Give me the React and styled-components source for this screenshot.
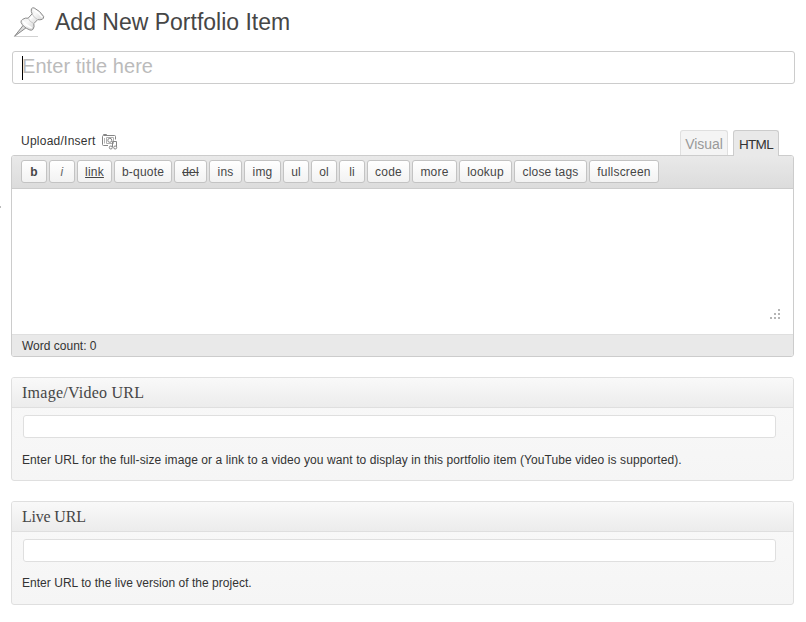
import React from "react";
import styled, { createGlobalStyle, css } from "styled-components";

const GlobalStyle = createGlobalStyle`
  *, *::before, *::after { box-sizing: border-box; }
  body {
    margin: 0;
    background: #fff;
    color: #333;
    font: 12px/18px "Liberation Sans", Arial, sans-serif;
  }
`;

const Page = styled.main`
  position: relative;
  width: 806px;
  height: 622px;
  padding: 0 12px 0 11px;
  overflow: hidden;
`;

const Heading = styled.header`
  display: flex;
  height: 51px;
`;

const PinIcon = styled.svg`
  width: 36px;
  height: 36px;
  margin: 4px 8px 0 0;
`;

const Title = styled.h1`
  margin: 7px 0 0;
  color: #464646;
  font-size: 23px;
  font-weight: 400;
  line-height: 30px;
  white-space: nowrap;
`;

const TitleField = styled.div`
  display: flex;
  width: 783px;
  height: 33px;
  margin-left: 1px;
  padding: 4px 9px;
  border: 1px solid #ccc;
  border-radius: 3px;
`;

const Caret = styled.span`
  width: 1px;
  height: 24px;
  margin-right: -1px;
  background: #000;
  z-index: 1;
`;

const Placeholder = styled.span`
  color: #bbb;
  font-size: 20px;
  line-height: 21px;
  letter-spacing: 0.06px;
  white-space: nowrap;
`;

const EditorTop = styled.div`
  display: flex;
  height: 71px;
  padding: 46px 15px 0 10px;
`;

const MediaLabel = styled.span`
  margin-top: 2px;
  line-height: 18px;
  letter-spacing: 0.25px;
`;

const MediaIcon = styled.svg`
  width: 16px;
  height: 16px;
  margin: 4px 0 0 6px;
`;

const Tabs = styled.div`
  display: flex;
  gap: 5px;
  margin-left: auto;
`;

const Tab = styled.div`
  width: ${(p) => p.$width}px;
  height: 25px;
  border: 1px solid #dfdfdf;
  border-bottom: 0;
  border-radius: 3px 3px 0 0;
  background: #f4f4f4;
  color: #999;
  font-size: 14px;
  line-height: 27px;
  letter-spacing: -0.1px;
  text-align: center;
  white-space: nowrap;
  ${(p) =>
    p.$active &&
    css`
      z-index: 1;
      height: 26px;
      border-color: #ccc;
      background: #e9e9e9;
      color: #333;
      font-size: 13.5px;
      letter-spacing: -0.7px;
    `}
`;

const Editor = styled.section`
  display: flex;
  flex-direction: column;
  width: 783px;
  height: 202px;
  border: 1px solid #ccc;
  border-radius: 3px;
  overflow: hidden;
`;

const Toolbar = styled.div`
  display: flex;
  gap: 2px;
  height: 33px;
  padding: 4px 9px;
  border-bottom: 1px solid #ccc;
  background: linear-gradient(#e9e9e9, #dcdcdc);
`;

const ToolButton = styled.button`
  width: ${(p) => p.$width}px;
  height: 23px;
  padding: 1px 0 0;
  border: 1px solid #c3c3c3;
  border-radius: 3px;
  background: linear-gradient(#fff, #f2f2f2);
  color: #464646;
  font: 12px/20px "Liberation Sans", Arial, sans-serif;
  letter-spacing: 0.2px;
  white-space: nowrap;
  ${(p) => p.$look}
`;

const TextArea = styled.div`
  display: flex;
  flex: 1;
  align-items: flex-end;
  justify-content: flex-end;
  padding: 0 12px 14px;
`;

const Grip = styled.svg`
  width: 11px;
  height: 11px;
`;

const StatusBar = styled.footer`
  height: 22px;
  padding: 1px 10px;
  border-top: 1px solid #dfdfdf;
  background: #e9e9e9;
  line-height: 20px;
`;

const Panel = styled.section`
  width: 783px;
  height: 104px;
  margin-top: 20px;
  border: 1px solid #dfdfdf;
  border-radius: 3px;
  background: linear-gradient(#f9f9f9, #f5f5f5);
  overflow: hidden;
`;

const PanelTitle = styled.h2`
  height: 30px;
  margin: 0;
  padding: 0 10px;
  border-bottom: 1px solid #dfdfdf;
  background: linear-gradient(#f9f9f9, #ececec);
  color: #464646;
  font: 16px/30px Georgia, "Bitstream Charter", "Liberation Serif", serif;
  letter-spacing: ${(p) => p.$spacing};
`;

const UrlField = styled.div`
  width: 753px;
  height: 23px;
  margin: 7px 0 0 11px;
  border: 1px solid #dfdfdf;
  border-radius: 3px;
  background: #fff;
`;

const Help = styled.p`
  margin: ${(p) => p.$gap} 0 0 10px;
  line-height: 18px;
  letter-spacing: ${(p) => p.$spacing};
  white-space: nowrap;
`;

const EdgeMark = styled.span`
  position: absolute;
  top: 206px;
  left: 0;
  width: 1px;
  height: 2px;
  background: #bbb;
`;

const bold = css`font-weight: 700;`;
const italic = css`font-style: italic; color: #666;`;
const underline = css`text-decoration: underline;`;
const strike = css`text-decoration: line-through;`;

const tools = [
  ["b", 26, bold],
  ["i", 26, italic],
  ["link", 35, underline],
  ["b-quote", 58],
  ["del", 33, strike],
  ["ins", 33],
  ["img", 37],
  ["ul", 26],
  ["ol", 26],
  ["li", 26],
  ["code", 43],
  ["more", 45],
  ["lookup", 53],
  ["close tags", 73],
  ["fullscreen", 70],
];

const panels = [
  {
    title: "Image/Video URL",
    help: "Enter URL for the full-size image or a link to a video you want to display in this portfolio item (YouTube video is supported).",
    titleSpacing: "0.25px",
    helpSpacing: "0.09px",
    helpGap: "13px",
  },
  {
    title: "Live URL",
    help: "Enter URL to the live version of the project.",
    titleSpacing: "-0.2px",
    helpSpacing: "0.03px",
    helpGap: "12px",
  },
];

function Pushpin() {
  return (
    <PinIcon viewBox="0 0 36 36">
      <defs>
        <linearGradient id="pin" x1="0" y1="0" x2="1" y2="1">
          <stop offset="0" stopColor="#dedede" />
          <stop offset=".45" stopColor="#f8f8f8" />
          <stop offset="1" stopColor="#bcbcbc" />
        </linearGradient>
      </defs>
      <path d="M4 32.5H27" stroke="#d2d2d2" strokeWidth="1" />
      <path d="M12.3 21.2L3.5 32.3L15.3 23.6Z" fill="#ddd" stroke="#888" strokeWidth="1" strokeLinejoin="round" />
      <path
        d="M20.4 4.8Q21.4 3.4 23.1 3.9Q29.3 7 32.6 12.4Q33 14.3 31.3 15.3Q28.8 16.2 26.7 15.6L22.8 19.6Q23.8 23 21.9 25.4Q20.8 26.6 18.9 26Q12.2 23.3 10 18.3Q9.8 16.4 11.5 15.4Q14.2 13.5 17.1 14.2L21.1 9.8Q19.8 7.4 20.4 4.8Z"
        fill="url(#pin)"
        stroke="#8b8b8b"
        strokeWidth="1"
      />
      <path d="M21.1 9.8Q22.6 13.5 26.7 15.6M17.1 14.2Q18.5 17.8 22.8 19.6" fill="none" stroke="#bdbdbd" strokeWidth=".8" />
      <path d="M22.2 5.3Q27.7 8.5 31.3 13.3M11.9 17Q15 21.6 20.8 23.9M21.7 12.2L19 15" fill="none" stroke="#fff" strokeWidth="1.4" />
    </PinIcon>
  );
}

function MediaGlyph() {
  return (
    <MediaIcon viewBox="0 0 16 16" fill="none" stroke="#858585">
      <path d="M6 11.5H1.5Q.5 11.5 .5 10.5V2.5Q.5 1.5 1.5 1.5H12.5Q13.5 1.5 13.5 2.5V5.5M1.5 1V.5H4.5V1" />
      <path d="M2.5 4V9.5" stroke="#b5b5b5" />
      <path d="M4.5 3.5H11.5V9.5H4.5Z" stroke="#b0b0b0" />
      <circle cx="7.8" cy="6.3" r="2" />
      <path d="M10.5 13V7.5H14.5V13" />
      <circle cx="8.8" cy="13.5" r="1.5" fill="#fff" />
      <circle cx="13.2" cy="13.5" r="1.5" fill="#fff" />
    </MediaIcon>
  );
}

export default function App() {
  return (
    <>
      <GlobalStyle />
      <Page>
        <EdgeMark />
        <Heading>
          <Pushpin />
          <Title>Add New Portfolio Item</Title>
        </Heading>
        <TitleField>
          <Caret />
          <Placeholder>Enter title here</Placeholder>
        </TitleField>
        <EditorTop>
          <MediaLabel>Upload/Insert</MediaLabel>
          <MediaGlyph />
          <Tabs>
            <Tab $width={48}>Visual</Tab>
            <Tab $width={46} $active>HTML</Tab>
          </Tabs>
        </EditorTop>
        <Editor>
          <Toolbar>
            {tools.map(([label, width, look]) => (
              <ToolButton key={label} $width={width} $look={look}>{label}</ToolButton>
            ))}
          </Toolbar>
          <TextArea>
            <Grip viewBox="0 0 11 11" fill="#b5b5b5" shapeRendering="crispEdges">
              <path d="M8 0h2v2h-2zM4 4h2v2h-2zM8 4h2v2h-2zM0 8h2v2h-2zM4 8h2v2h-2zM8 8h2v2h-2z" />
            </Grip>
          </TextArea>
          <StatusBar>Word count: 0</StatusBar>
        </Editor>
        {panels.map((panel) => (
          <Panel key={panel.title}>
            <PanelTitle $spacing={panel.titleSpacing}>{panel.title}</PanelTitle>
            <UrlField />
            <Help $spacing={panel.helpSpacing} $gap={panel.helpGap}>{panel.help}</Help>
          </Panel>
        ))}
      </Page>
    </>
  );
}
